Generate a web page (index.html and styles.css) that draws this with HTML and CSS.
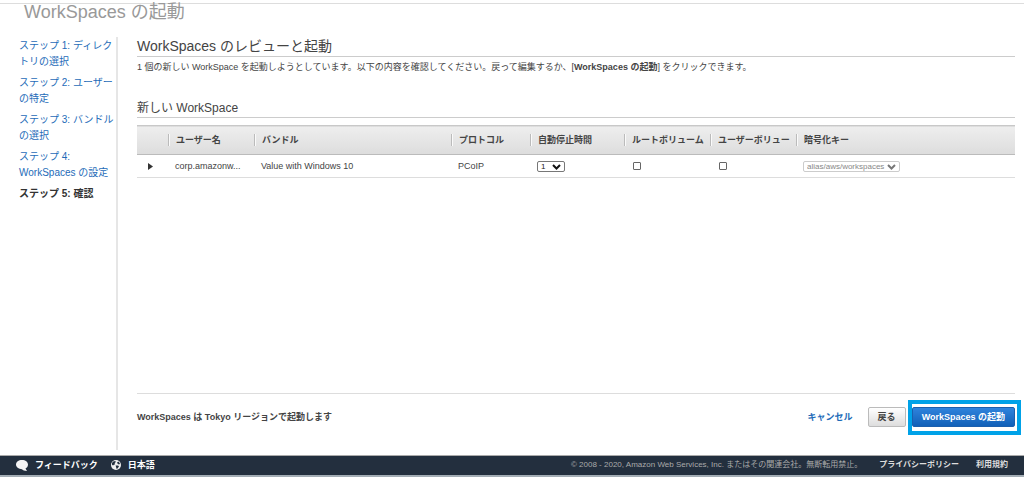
FILE: index.html
```html
<!DOCTYPE html>
<html lang="ja">
<head>
<meta charset="utf-8">
<meta name="viewport" content="width=device-width, initial-scale=1">
<title>WorkSpaces の起動</title>
<link rel="stylesheet" href="styles.css">
</head>
<body>
<header class="page-header">
  <h1 class="page-title">WorkSpaces の起動</h1>
</header>
<div class="layout">
  <nav class="steps" aria-label="ステップ">
    <ol class="steps-list">
      <li><a href="#step1">ステップ 1: ディレクトリの選択</a></li>
      <li><a href="#step2">ステップ 2: ユーザーの特定</a></li>
      <li><a href="#step3">ステップ 3: バンドルの選択</a></li>
      <li><a href="#step4">ステップ 4: <br>WorkSpaces の設定</a></li>
      <li class="current" aria-current="step">ステップ 5: 確認</li>
    </ol>
  </nav>
  <main class="content">
    <h2 class="section-title">WorkSpaces のレビューと起動</h2>
    <p class="intro">1 個の新しい WorkSpace を起動しようとしています。以下の内容を確認してください。戻って編集するか、[<b>WorkSpaces の起動</b>] をクリックできます。</p>
    <h3 class="table-title">新しい WorkSpace</h3>
    <table class="grid">
      <colgroup>
        <col class="col-toggle"><col class="col-user"><col class="col-bundle"><col class="col-protocol"><col class="col-stop"><col class="col-volume"><col class="col-volume"><col>
      </colgroup>
      <thead>
        <tr>
          <td></td>
          <th scope="col"><span>ユーザー名</span></th>
          <th scope="col"><span>バンドル</span></th>
          <th scope="col"><span>プロトコル</span></th>
          <th scope="col"><span>自動停止時間</span></th>
          <th scope="col"><span>ルートボリューム</span></th>
          <th scope="col"><span>ユーザーボリュー</span></th>
          <th scope="col"><span>暗号化キー</span></th>
        </tr>
      </thead>
      <tbody>
        <tr>
          <td class="toggle-cell"><button type="button" class="toggle" aria-label="詳細"><svg viewBox="0 0 5 7" width="5" height="7"><path d="M0 0L5 3.5L0 7Z" fill="#333"/></svg></button></td>
          <td>corp.amazonw...</td>
          <td>Value with Windows 10</td>
          <td>PCoIP</td>
          <td><span class="picker"><select class="select select-hours" aria-label="自動停止時間"><option>1</option></select><svg class="chevron" viewBox="0 0 9 6" width="9" height="6"><path d="M1 1L4.500 4.500L8 1" fill="none" stroke="#111" stroke-width="2"/></svg></span></td>
          <td><input type="checkbox" class="check" aria-label="ルートボリューム"></td>
          <td><input type="checkbox" class="check" aria-label="ユーザーボリューム"></td>
          <td><span class="picker"><select class="select select-key" aria-label="暗号化キー" disabled><option>alias/aws/workspaces</option></select><svg class="chevron" viewBox="0 0 9 6" width="9" height="6"><path d="M1 1L4.500 4.500L8 1" fill="none" stroke="#777" stroke-width="2"/></svg></span></td>
        </tr>
      </tbody>
    </table>
    <div class="actions">
      <b class="region-note">WorkSpaces は Tokyo リージョンで起動します</b>
      <a class="cancel" href="#cancel">キャンセル</a>
      <button type="button" class="btn">戻る</button>
      <span class="highlight"><button type="button" class="btn btn-primary">WorkSpaces の起動</button></span>
    </div>
  </main>
</div>
<footer class="footer">
  <a class="footer-link" href="#feedback"><svg viewBox="0 0 12 11" width="12" height="11"><path d="M6 0C9.500 0 12 2 12 4.600C12 6.500 11 7.800 9.500 8.600L11 11C8.500 10.900 7 10.200 6 9.200C2.500 9.200 0 7.200 0 4.600C0 2 2.500 0 6 0Z" fill="#f5f5f5"/></svg>フィードバック</a>
  <a class="footer-link" href="#language"><svg viewBox="0 0 10 10" width="10" height="10"><circle cx="5" cy="5" r="5" fill="#f0f0f0"/><path d="M1 3L2.200 1.500L4.300 1L4.800 2L3.600 3.300L4.200 4.300L3 4.700L2 5.600L1 4.800ZM6 2.600L7.500 1.500L9 3.600L8.200 4.600L6.800 4.100ZM4.600 5.600L7 5.400L8 6.300L6.800 8.300L5.600 8.900L5.100 7.200Z" fill="#232f3e"/></svg>日本語</a>
  <small class="copyright">© 2008 - 2020, Amazon Web Services, Inc. またはその関連会社。無断転用禁止。</small>
  <a class="legal" href="#privacy">プライバシーポリシー</a>
  <a class="legal" href="#terms">利用規約</a>
</footer>
</body>
</html>
```
FILE: styles.css
```css
* {
  box-sizing: border-box;
}

body {
  margin: 0;
  min-height: 100vh;
  display: flex;
  flex-direction: column;
  background: #fff;
  color: #444;
  font: 9px/16px "Liberation Sans", "Noto Sans CJK JP", sans-serif;
}

a {
  color: #1e6bb8;
  text-decoration: none;
}

h1, h2, h3, p, ol {
  margin: 0;
  padding: 0;
  font-weight: normal;
}

button, select, input {
  font: inherit;
  margin: 0;
}

.page-header {
  margin-top: 3px;
  padding: 0 24px;
  border-top: 1px solid #ddd;
}

.page-title {
  color: #999;
  font-size: 18px;
  line-height: 16px;
}

.layout {
  flex: 1;
  display: flex;
  gap: 19px;
  padding: 17px 9px 5px 19px;
}

.steps {
  flex: 0 0 99px;
  padding-top: 1px;
  border-right: 2px solid #e6e6e6;
  font-size: 10px;
}

.steps-list {
  display: flex;
  flex-direction: column;
  gap: 5px;
  list-style: none;
}

.current {
  color: #333;
  font-weight: bold;
}

.content {
  flex: 1;
  min-width: 0;
  display: flex;
  flex-direction: column;
}

.section-title {
  border-bottom: 1px solid #ccc;
  color: #444;
  font-size: 14px;
  line-height: 19px;
}

.intro {
  padding-top: 2px;
}

.table-title {
  margin: 24px 0 7px;
  border-bottom: 1px solid #ccc;
  font-size: 12px;
  line-height: 18px;
}

.grid {
  width: 100%;
  border-collapse: collapse;
  table-layout: fixed;
}

.col-toggle { width: 31px; }
.col-user { width: 86px; }
.col-bundle { width: 197px; }
.col-protocol { width: 79px; }
.col-stop { width: 94px; }
.col-volume { width: 86px; }

.grid th,
.grid td {
  padding: 0;
  text-align: left;
  white-space: nowrap;
  overflow: hidden;
}

.grid thead tr {
  height: 29px;
  border-top: 1px solid #c8c8c8;
  border-bottom: 1px solid #bbb;
  background: linear-gradient(#eee, #ddd);
}

.grid th span {
  display: block;
  height: 12px;
  padding-left: 7px;
  border-left: 1px solid #bbb;
  box-shadow: inset 1px 0 #fafafa;
  line-height: 12px;
}

.grid tbody tr {
  height: 23px;
  border-bottom: 1px solid #ddd;
}

.grid tbody td {
  padding-left: 7px;
  vertical-align: middle;
}

.toggle {
  display: flex;
  margin-left: 3px;
  padding: 1px;
  border: 0;
  background: none;
}

.picker {
  display: flex;
  width: max-content;
  position: relative;
}

.chevron {
  position: absolute;
  right: 4px;
  top: 3px;
  pointer-events: none;
}

.select {
  appearance: none;
  height: 11px;
  padding: 0 3px;
  border: 1px solid #777;
  border-radius: 2px;
  background: #fff;
  color: #222;
  font-size: 8px;
  line-height: 9px;
}

.select-hours { width: 28px; }

.select-key {
  width: 97px;
  border-color: #ccc;
  color: #888;
  opacity: 1;
}

.check {
  appearance: none;
  display: block;
  width: 8px;
  height: 8px;
  margin-left: 2px;
  border: 1px solid #666;
  border-radius: 1px;
  background: #fff;
}

.check:checked {
  background: #1e6bb8;
}

.actions {
  display: flex;
  align-items: center;
  margin-top: auto;
  margin-bottom: 23px;
  padding-top: 13px;
  border-top: 1px solid #ddd;
}

.region-note {
  flex: 1;
}

.cancel {
  margin-right: 15px;
  font-weight: bold;
}

.btn {
  height: 20px;
  padding: 0 9px;
  border: 1px solid #bbb;
  border-radius: 2px;
  background: linear-gradient(#fff, #ddd);
  color: #444;
  font-weight: bold;
  line-height: 16px;
}

.btn-primary {
  border-color: #1b5fae;
  background: linear-gradient(#2f83dc, #1160b8);
  color: #fff;
}

.highlight {
  display: flex;
  margin-left: 6px;
  position: relative;
}

.highlight::after {
  content: "";
  position: absolute;
  inset: -7px -6px -8px -4px;
  border: 4px solid #00a2e8;
  pointer-events: none;
}

.footer {
  display: flex;
  align-items: center;
  gap: 17px;
  padding: 1px 16px 2px;
  border-top: 1px solid #aaa;
  border-bottom: 2px solid #a3adb5;
  background: #232f3e;
  color: #aaa;
}

.footer-link {
  display: flex;
  align-items: center;
  gap: 7px;
  margin-right: -4px;
  color: #fff;
  font-weight: bold;
}

.copyright {
  margin-left: auto;
  font-size: 8px;
}

.legal {
  color: #ddd;
  font-size: 8px;
  font-weight: bold;
}
```
